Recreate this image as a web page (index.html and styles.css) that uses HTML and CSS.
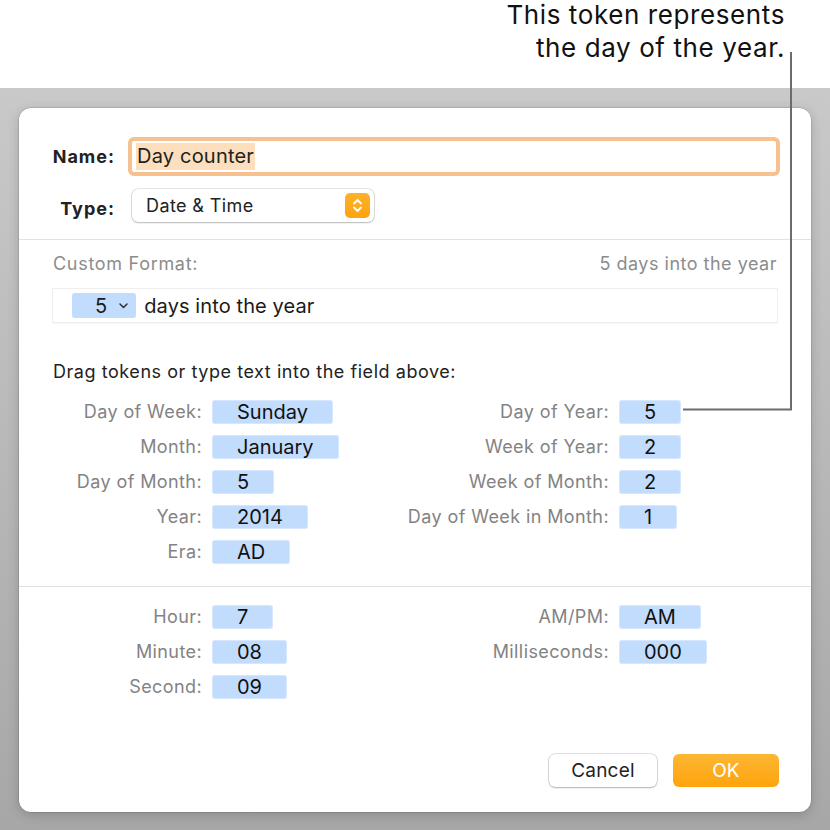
FILE: index.html
```html
<!DOCTYPE html>
<html lang="en">
<head>
<meta charset="utf-8">
<title>Custom Format</title>
<link rel="stylesheet" href="styles.css">
</head>
<body>
<div class="page">
  <header class="callout">
    <p>This token represents<br>the day of the year.</p>
  </header>
  <main class="backdrop">
    <section class="dialog">
      <div class="form-grid">
        <label class="lbl-b">Name:</label>
        <div class="name-field"><span class="sel">Day counter</span></div>
        <label class="lbl-b lbl-type">Type:</label>
        <div class="popup">
          <span>Date &amp; Time</span>
          <span class="stepper">
            <svg width="25" height="25" viewBox="0 0 25 25"><path d="M9 10.5 L12.5 7 L16 10.5 M9 14.5 L12.5 18 L16 14.5" fill="none" stroke="#fff" stroke-width="1.8" stroke-linecap="round" stroke-linejoin="round"/></svg>
          </span>
        </div>
      </div>
      <hr class="sep">
      <div class="pad">
        <div class="format-head"><span>Custom Format:</span><span>5 days into the year</span></div>
        <div class="format-field">
          <span class="ftoken">5<svg width="9" height="6" viewBox="0 0 9 6"><path d="M1 1 L4.5 4.5 L8 1" fill="none" stroke="#333" stroke-width="1.5" stroke-linecap="round" stroke-linejoin="round"/></svg></span>
          <span>days into the year</span>
        </div>
        <p class="hint">Drag tokens or type text into the field above:</p>
        <div class="tokens">
          <span class="tl">Day of Week:</span><span class="tk">Sunday</span>
          <span class="tl">Day of Year:</span><span class="tk">5</span>
          <span class="tl">Month:</span><span class="tk">January</span>
          <span class="tl">Week of Year:</span><span class="tk">2</span>
          <span class="tl">Day of Month:</span><span class="tk">5</span>
          <span class="tl">Week of Month:</span><span class="tk">2</span>
          <span class="tl">Year:</span><span class="tk">2014</span>
          <span class="tl">Day of Week in Month:</span><span class="tk">1</span>
          <span class="tl">Era:</span><span class="tk">AD</span>
        </div>
      </div>
      <hr class="sep sep2">
      <div class="pad">
        <div class="tokens time">
          <span class="tl">Hour:</span><span class="tk">7</span>
          <span class="tl">AM/PM:</span><span class="tk">AM</span>
          <span class="tl">Minute:</span><span class="tk">08</span>
          <span class="tl">Milliseconds:</span><span class="tk">000</span>
          <span class="tl">Second:</span><span class="tk">09</span>
        </div>
      </div>
      <div class="buttons">
        <button class="btn btn-cancel">Cancel</button>
        <button class="btn btn-ok">OK</button>
      </div>
    </section>
  </main>
  <svg class="leader" width="830" height="830" viewBox="0 0 830 830">
    <polyline points="791,52 791,409.5 683,409.5" fill="none" stroke="#6c6c6c" stroke-width="2"/>
  </svg>
</div>
</body>
</html>
```
FILE: styles.css
```css
html, body {
  margin: 0;
  padding: 0;
  background: #fff;
}
body {
  font-family: Inter, "Liberation Sans", sans-serif;
  color: #222;
}
.page {
  position: relative;
  width: 830px;
  height: 830px;
  overflow: hidden;
  display: flex;
  flex-direction: column;
}
.callout {
  height: 88px;
  flex: none;
  display: flex;
  justify-content: flex-end;
  padding-right: 45px;
}
.callout p {
  margin: -2px 0 0;
  text-align: right;
  font-size: 26px;
  line-height: 33px;
  color: #111;
  letter-spacing: 0.6px;
}
.backdrop {
  flex: 1;
  background: linear-gradient(#c9c9c9, #a7a7a7);
  padding: 20px 19px 18px;
}
.dialog {
  height: 704px;
  box-sizing: border-box;
  background: #fff;
  border-radius: 12px;
  box-shadow: 0 0 0 0.5px rgba(0,0,0,0.18), 0 3px 12px rgba(0,0,0,0.18);
  display: flex;
  flex-direction: column;
  padding-top: 29px;
}
.form-grid {
  display: grid;
  grid-template-columns: 96px 1fr;
  column-gap: 13px;
  row-gap: 13px;
  padding-right: 31px;
  align-items: center;
}
.lbl-b {
  text-align: right;
  font-weight: 700;
  font-size: 18px;
  letter-spacing: 1px;
  color: #222;
}
.lbl-type {
  padding-top: 6px;
}
.name-field {
  height: 39px;
  box-sizing: border-box;
  border: 4px solid #f6c18f;
  border-radius: 6px;
  display: flex;
  align-items: center;
  padding-left: 4px;
}
.sel {
  background: #fddfbd;
  font-size: 20px;
  line-height: 27px;
  padding: 0 1px;
  color: #222;
  letter-spacing: 0.2px;
}
.popup {
  margin-left: 4px;
  width: 242px;
  height: 33px;
  box-sizing: border-box;
  border-radius: 6px;
  box-shadow: 0 0 0 0.5px rgba(0,0,0,0.2), 0 1px 2px rgba(0,0,0,0.2);
  display: flex;
  align-items: center;
  justify-content: space-between;
  padding: 0 4px 0 14px;
  font-size: 18px;
  letter-spacing: 0.4px;
  color: #222;
}
.stepper {
  width: 25px;
  height: 25px;
  border-radius: 5px;
  background: linear-gradient(#fdb22b, #fda310);
  display: flex;
}
.sep {
  border: 0;
  border-top: 1px solid #e2e2e2;
  margin: 17px 0 0;
  width: 100%;
}
.pad {
  padding: 0 34px;
}
.format-head {
  display: flex;
  justify-content: space-between;
  margin-top: 13px;
  line-height: 22px;
  font-size: 18px;
  color: #8c8c8c;
}
.format-head span:first-child {
  letter-spacing: 0.7px;
}
.format-head span:last-child {
  letter-spacing: 0.5px;
}
.format-field {
  margin-top: 14px;
  height: 33px;
  box-sizing: border-box;
  box-shadow: 0 0 0 1px #eeeeee, 0 1px 1px 0 #c4c4c4;
  display: flex;
  align-items: center;
  padding-left: 19px;
  gap: 8px;
  font-size: 20px;
  letter-spacing: 0.1px;
  color: #1a1a1a;
}
.ftoken {
  background: #c2dcfd;
  border-radius: 3px;
  height: 25px;
  display: flex;
  align-items: center;
  padding: 0 8px 0 23px;
  gap: 12px;
}
.hint {
  margin: 39px 0 0;
  font-size: 18px;
  line-height: 22px;
  letter-spacing: 0.55px;
  color: #222;
}
.tokens {
  display: grid;
  grid-template-columns: 149px 180px 1fr 158px;
  column-gap: 10px;
  grid-auto-rows: 35px;
  align-items: center;
  margin-top: 11px;
}
.tl {
  text-align: right;
  color: #838383;
  font-size: 18px;
  letter-spacing: 0.4px;
  white-space: nowrap;
}
.tk {
  justify-self: start;
  background: #c2dcfd;
  border-radius: 3px;
  height: 24px;
  line-height: 24px;
  padding: 0 25px;
  font-size: 20px;
  color: #111;
  box-shadow: inset 0 0 0 1px rgba(255,255,255,0.35);
}
.sep2 {
  margin-top: 17px;
}
.time {
  margin-top: 12px;
}
.buttons {
  margin-top: auto;
  display: flex;
  justify-content: flex-end;
  gap: 16px;
  padding: 0 32px 25px;
}
.btn {
  height: 33px;
  border: 0;
  border-radius: 6px;
  font-family: inherit;
  font-size: 19px;
  letter-spacing: 0.2px;
  padding: 0;
}
.btn-cancel {
  width: 108px;
  background: #fff;
  color: #222;
  box-shadow: 0 0 0 0.5px rgba(0,0,0,0.22), 0 1px 2px rgba(0,0,0,0.22);
}
.btn-ok {
  width: 106px;
  background: linear-gradient(#fdb734, #fea30c);
  color: #fff;
}
.leader {
  position: absolute;
  left: 0;
  top: 0;
  pointer-events: none;
}
```
